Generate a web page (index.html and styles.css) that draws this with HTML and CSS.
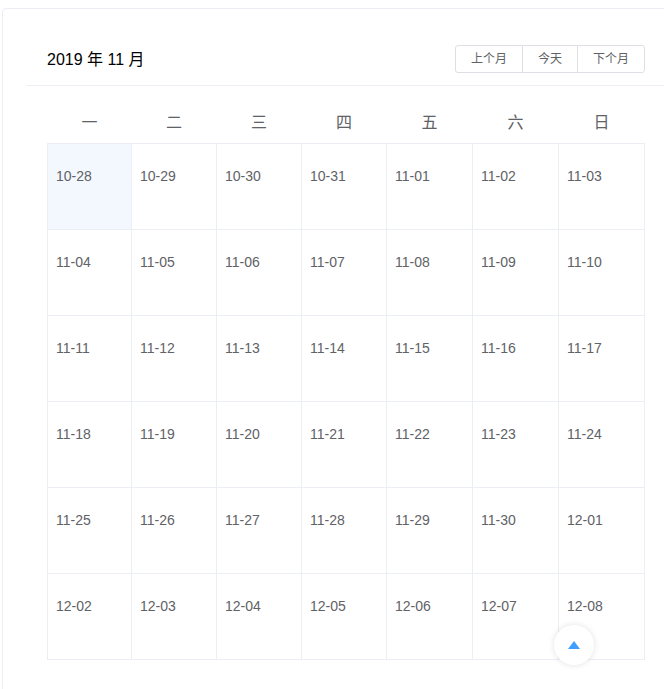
FILE: index.html
```html
<!DOCTYPE html>
<html lang="zh-CN">
<head>
<meta charset="utf-8">
<title>Calendar</title>
<link rel="stylesheet" href="styles.css">
</head>
<body>
<div class="page">
  <div class="card">
    <div class="calendar">
      <div class="cal-header">
        <div class="cal-title">2019 年 11 月</div>
        <div class="btn-group">
          <button class="btn">上个月</button>
          <button class="btn">今天</button>
          <button class="btn">下个月</button>
        </div>
      </div>
      <div class="cal-body">
        <table class="cal-table">
          <colgroup>
            <col class="col-a"><col class="col-b"><col class="col-b"><col class="col-b"><col class="col-c"><col class="col-c"><col class="col-c">
          </colgroup>
          <thead>
            <tr><th>一</th><th>二</th><th>三</th><th>四</th><th>五</th><th>六</th><th>日</th></tr>
          </thead>
          <tbody>
            <tr>
              <td class="selected"><div class="day"><p>10-28</p></div></td>
              <td><div class="day"><p>10-29</p></div></td>
              <td><div class="day"><p>10-30</p></div></td>
              <td><div class="day"><p>10-31</p></div></td>
              <td><div class="day"><p>11-01</p></div></td>
              <td><div class="day"><p>11-02</p></div></td>
              <td><div class="day"><p>11-03</p></div></td>
            </tr>
            <tr>
              <td><div class="day"><p>11-04</p></div></td>
              <td><div class="day"><p>11-05</p></div></td>
              <td><div class="day"><p>11-06</p></div></td>
              <td><div class="day"><p>11-07</p></div></td>
              <td><div class="day"><p>11-08</p></div></td>
              <td><div class="day"><p>11-09</p></div></td>
              <td><div class="day"><p>11-10</p></div></td>
            </tr>
            <tr>
              <td><div class="day"><p>11-11</p></div></td>
              <td><div class="day"><p>11-12</p></div></td>
              <td><div class="day"><p>11-13</p></div></td>
              <td><div class="day"><p>11-14</p></div></td>
              <td><div class="day"><p>11-15</p></div></td>
              <td><div class="day"><p>11-16</p></div></td>
              <td><div class="day"><p>11-17</p></div></td>
            </tr>
            <tr>
              <td><div class="day"><p>11-18</p></div></td>
              <td><div class="day"><p>11-19</p></div></td>
              <td><div class="day"><p>11-20</p></div></td>
              <td><div class="day"><p>11-21</p></div></td>
              <td><div class="day"><p>11-22</p></div></td>
              <td><div class="day"><p>11-23</p></div></td>
              <td><div class="day"><p>11-24</p></div></td>
            </tr>
            <tr>
              <td><div class="day"><p>11-25</p></div></td>
              <td><div class="day"><p>11-26</p></div></td>
              <td><div class="day"><p>11-27</p></div></td>
              <td><div class="day"><p>11-28</p></div></td>
              <td><div class="day"><p>11-29</p></div></td>
              <td><div class="day"><p>11-30</p></div></td>
              <td><div class="day"><p>12-01</p></div></td>
            </tr>
            <tr>
              <td><div class="day"><p>12-02</p></div></td>
              <td><div class="day"><p>12-03</p></div></td>
              <td><div class="day"><p>12-04</p></div></td>
              <td><div class="day"><p>12-05</p></div></td>
              <td><div class="day"><p>12-06</p></div></td>
              <td><div class="day"><p>12-07</p></div></td>
              <td><div class="day"><p>12-08</p></div></td>
            </tr>
          </tbody>
        </table>
      </div>
    </div>
  </div>
</div>
<div class="backtop">
  <svg width="12" height="8" viewBox="0 0 12 8"><polygon points="6,0 12,8 0,8" fill="#409eff"/></svg>
</div>
</body>
</html>
```

FILE: styles.css
```css
html, body {
  margin: 0;
  padding: 0;
  overflow: hidden;
  background: #fff;
}
body {
  font-family: "Liberation Sans", "Noto Sans CJK SC", sans-serif;
  color: #606266;
}
.page {
  padding: 8px 0 0 2px;
  width: 662px;
  height: 681px;
  overflow: hidden;
}
.card {
  width: 686px;
  border: 1px solid #ebeef5;
  border-radius: 4px;
  padding: 24px 24px 24px 24px;
  background: #fff;
}
.calendar {
  width: 638px;
  background: #fff;
}
.cal-header {
  display: flex;
  justify-content: space-between;
  align-items: center;
  padding: 12px 20px;
  border-bottom: 1px solid #ebeef5;
}
.cal-title {
  font-size: 16px;
  color: #000;
  line-height: 20px;
  padding-top: 2px;
}
.btn-group {
  display: flex;
}
.btn {
  font-family: "Liberation Sans", "Noto Sans CJK SC", sans-serif;
  font-size: 12px;
  line-height: 12px;
  height: 28px;
  padding: 7px 15px;
  border: 1px solid #dcdfe6;
  background: #fff;
  color: #606266;
  border-radius: 0;
  margin: 0 -1px 0 0;
  box-sizing: border-box;
  white-space: nowrap;
}
.btn:first-child {
  border-radius: 3px 0 0 3px;
}
.btn:last-child {
  border-radius: 0 3px 3px 0;
  margin-right: 0;
}
.cal-body {
  padding: 12px 20px 35px;
}
.cal-table {
  width: 598px;
  table-layout: fixed;
  border-collapse: collapse;
  border-spacing: 0;
}
.col-a { width: 84px; }
.col-b { width: 85px; }
.col-c { width: 86px; }
.cal-table th {
  padding: 14px 0 10px;
  font-size: 16px;
  line-height: 21px;
  font-weight: normal;
  color: #606266;
  text-align: center;
}
.cal-table td {
  border: 1px solid #ebeef5;
  padding: 0;
  vertical-align: top;
}
.cal-table td.selected {
  background: #f2f8fe;
}
.day {
  height: 85px;
  box-sizing: border-box;
  padding: 8px;
  overflow: hidden;
}
.day p {
  margin: 16px 0;
  font-size: 14px;
  line-height: 16px;
  color: #606266;
}
.backtop {
  position: fixed;
  right: 70px;
  bottom: 24px;
  width: 40px;
  height: 40px;
  border-radius: 50%;
  background: #fff;
  box-shadow: 0 0 6px rgba(0, 0, 0, 0.12);
  display: flex;
  align-items: center;
  justify-content: center;
}
.backtop svg {
  display: block;
}
```
